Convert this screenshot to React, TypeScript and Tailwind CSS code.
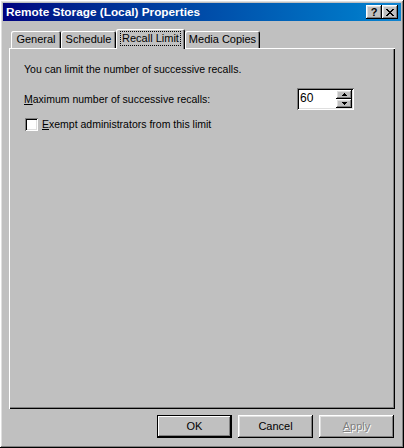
import React from "react";

const raised =
  "shadow-[inset_-1px_-1px_#000,inset_1px_1px_#fff,inset_-2px_-2px_#808080,inset_2px_2px_#dfdfdf]";

function Tab({ label, w, selected }: { label: string; w: string; selected?: boolean }) {
  if (selected) {
    return (
      <div
        className={`${w} h-[20px] -mb-px relative z-10 bg-[#c0c0c0] flex items-start justify-center pt-[2px] rounded-t-[2px] shadow-[inset_1px_1px_#fff,inset_-1px_0_#000,inset_-2px_0_#808080]`}
      >
        <span className="border border-dotted border-black px-[1px] leading-[13px]">{label}</span>
      </div>
    );
  }
  return (
    <div
      className={`${w} h-[17px] bg-[#c0c0c0] flex items-start justify-center pt-[2px] rounded-t-[2px] shadow-[inset_1px_1px_#fff,inset_-1px_0_#000,inset_-2px_0_#808080]`}
    >
      <span className="leading-[13px]">{label}</span>
    </div>
  );
}

function Btn({ children, def, disabled }: { children: React.ReactNode; def?: boolean; disabled?: boolean }) {
  return (
    <div
      className={`w-[75px] h-[23px] flex items-center justify-center text-[11px] ${
        def
          ? "shadow-[inset_0_0_0_1px_#000,inset_-2px_-2px_#000,inset_2px_2px_#fff,inset_-3px_-3px_#808080]"
          : raised
      } ${disabled ? "text-[#808080] [text-shadow:1px_1px_#fff]" : "text-black"}`}
    >
      {children}
    </div>
  );
}

export default function App() {
  return (
    <div
      className={`w-[404px] h-[448px] bg-[#c0c0c0] p-[3px] flex flex-col ${raised} text-[10.5px] text-black`}
      style={{ fontFamily: '"Liberation Sans", Arial, sans-serif' }}
    >
      {/* Title bar */}
      <div className="h-[18px] bg-linear-to-r from-[#000080] to-[#1084d0] flex items-center pl-[3px] pr-[3px]">
        <span className="text-white font-bold text-[11.8px] leading-[14px]">Remote Storage (Local) Properties</span>
        <div className="ml-auto flex">
          <div className={`w-[16px] h-[14px] bg-[#c0c0c0] ${raised} flex items-center justify-center text-[11px] font-bold leading-none`}>
            ?
          </div>
          <div className={`w-[16px] h-[14px] bg-[#c0c0c0] ${raised} flex items-center justify-center`}>
            <svg width="8" height="7" viewBox="0 0 8 7">
              <path d="M0 0h2v1h1v1h2V1h1V0h2v1H7v1H6v1H5v1h1v1h1v1h1v1H6V6H5V5H3v1H2v1H0V6h1V5h1V4h1V3H2V2H1V1H0z" fill="#000" />
            </svg>
          </div>
        </div>
      </div>

      {/* Body */}
      <div className="flex-1 flex flex-col px-[6px] pt-[8px] pb-[7px]">
        <div className="h-[19px] flex items-end pl-[2px] text-[11px]">
          <Tab label="General" w="w-[50px]" />
          <Tab label="Schedule" w="w-[55px]" />
          <Tab label="Recall Limit" w="w-[69px]" selected />
          <Tab label="Media Copies" w="w-[75px]" />
        </div>
        <div
          className={`flex-1 flex flex-col pl-[15px] pr-[41px] pt-[15px] shadow-[inset_1px_1px_#fff,inset_-1px_-1px_#000,inset_-2px_-2px_#808080]`}
        >
          <div className="leading-[13px]">You can limit the number of successive recalls.</div>
          <div className="flex items-center mt-[12px] h-[22px]">
            <span className="leading-[13px]">
              <span className="underline">M</span>aximum number of successive recalls:
            </span>
            <div className="ml-auto w-[57px] h-[22px] bg-white flex shadow-[inset_1px_1px_#808080,inset_-1px_-1px_#fff,inset_2px_2px_#000,inset_-2px_-2px_#dfdfdf] p-[2px]">
              <span className="flex-1 leading-[16px] pl-[1px] text-[12px]">60</span>
              <div className="w-[16px] flex flex-col">
                <div className={`h-[9px] bg-[#c0c0c0] ${raised} flex items-center justify-center`}>
                  <svg width="5" height="3" viewBox="0 0 5 3">
                    <path d="M2 0h1v1h1v1h1v1H0V2h1V1h1z" fill="#000" />
                  </svg>
                </div>
                <div className={`h-[9px] bg-[#c0c0c0] ${raised} flex items-center justify-center`}>
                  <svg width="5" height="3" viewBox="0 0 5 3">
                    <path d="M0 0h5v1H4v1H3v1H2V2H1V1H0z" fill="#000" />
                  </svg>
                </div>
              </div>
            </div>
          </div>
          <div className="flex items-center mt-[8px]">
            <div className="w-[13px] h-[13px] ml-[1px] bg-white shadow-[inset_1px_1px_#808080,inset_-1px_-1px_#fff,inset_2px_2px_#000,inset_-2px_-2px_#dfdfdf]" />
            <span className="ml-[4px] leading-[13px]">
              <span className="underline">E</span>xempt administrators from this limit
            </span>
          </div>
        </div>
        <div className="flex justify-end gap-[6px] mt-[6px] pr-[1px]">
          <Btn def>OK</Btn>
          <Btn>Cancel</Btn>
          <Btn disabled>
            <span>
              <span className="underline">A</span>pply
            </span>
          </Btn>
        </div>
      </div>
    </div>
  );
}
